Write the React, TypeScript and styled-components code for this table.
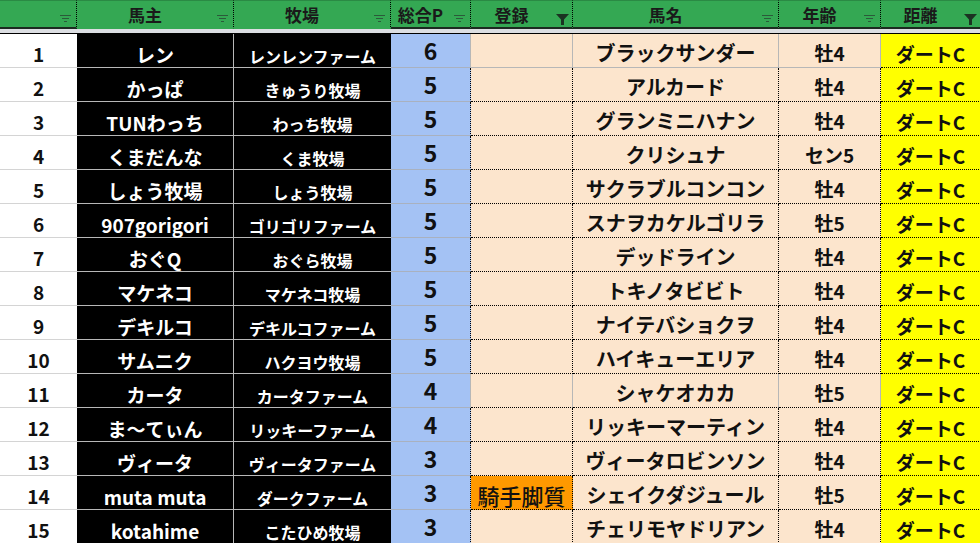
import React from "react";
import styled, { createGlobalStyle, css } from "styled-components";

const Global = createGlobalStyle`
  html, body { margin: 0; padding: 0; background: #ffffff; overflow: hidden; }
  body { font-family: "Noto Sans CJK JP", "Noto Sans", sans-serif; }
`;

const FONT = `"Noto Sans CJK JP", "Noto Sans", sans-serif`;
const COLS = "77px 157px 157px 80px 102px 206px 102px 100px";
const GRID = "#b7b7b7";
const DOT = "1px dotted #000";

const Sheet = styled.div`
  width: 981px;
  font-family: ${FONT};
`;

const HeaderRow = styled.div`
  display: grid;
  grid-template-columns: ${COLS};
  height: 29px;
`;

const HeaderCell = styled.div<{ $dark: boolean }>`
  position: relative;
  box-sizing: border-box;
  height: 29px;
  background: #34a853;
  border-top: 1px solid #2a8a44;
  border-right: ${DOT};
  border-bottom: 2px solid ${(p) => (p.$dark ? "#1c2a20" : "#34a853")};
  display: flex;
  align-items: center;
  justify-content: center;
  padding: 2px 20px 0 0;
  font-size: 17px;
  font-weight: 700;
  line-height: 22px;
  color: #1a1a1a;
`;

const FilterSlot = styled.span<{ $active: boolean }>`
  position: absolute;
  right: ${(p) => (p.$active ? "3px" : "5px")};
  bottom: ${(p) => (p.$active ? "2px" : "4px")};
  display: flex;
`;

const Divider = styled.div`
  height: 4px;
  background: #dcdee2;
  border-bottom: 1px solid #000;
`;

const Body = styled.div`
  display: grid;
  grid-template-columns: ${COLS};
  grid-auto-rows: 34px;
`;

type Kind = "num" | "owner" | "farm" | "point" | "reg" | "horse" | "age" | "dist";

const cellBase = css`
  box-sizing: border-box;
  display: flex;
  justify-content: center;
  white-space: nowrap;
  overflow: visible;
  font-family: ${FONT};
  font-weight: 700;
`;

const Cell = styled.div<{ $kind: Kind; $plain: boolean; $plainBottom: boolean; $hl?: boolean }>`
  ${cellBase}
  ${(p) => {
    switch (p.$kind) {
      case "num":
        return css`
          background: #fff;
          color: #111;
          border-bottom: 1px solid #d4d4d4;
          align-items: flex-end;
          padding-bottom: 1px;
          font-size: 19px;
          line-height: 24px;
        `;
      case "owner":
        return css`
          background: #000;
          color: #fff;
          border-right: 1px solid ${GRID};
          border-bottom: 1px solid ${GRID};
          align-items: flex-end;
          padding-bottom: 0px;
          font-size: 19px;
          line-height: 24px;
        `;
      case "farm":
        return css`
          background: #000;
          color: #fff;
          border-bottom: 1px solid ${GRID};
          align-items: flex-end;
          padding-bottom: 0px;
          font-size: 16px;
          line-height: 22px;
        `;
      case "point":
        return css`
          background: #a4c2f4;
          color: #111;
          border-right: ${p.$plain ? `1px solid ${GRID}` : DOT};
          border-bottom: 1px solid #a9b1bf;
          align-items: center;
          font-size: 23px;
          line-height: 28px;
          padding-bottom: 1px;
        `;
      case "dist":
        return css`
          background: #ffff00;
          color: #111;
          border-right: ${DOT};
          border-bottom: ${DOT};
          align-items: flex-end;
          padding-bottom: 1px;
          font-size: 19px;
          line-height: 24px;
        `;
      default:
        return css`
          background: ${p.$hl ? "#ff9900" : "#fce5cd"};
          color: #111;
          border-right: ${p.$plain ? `1px solid ${GRID}` : DOT};
          border-bottom: ${p.$plainBottom ? `1px solid ${GRID}` : DOT};
          align-items: flex-end;
          padding-bottom: 1px;
          font-size: ${p.$kind === "horse" ? "20px" : p.$kind === "reg" ? "22px" : "19px"};
          font-weight: ${p.$kind === "reg" ? 500 : 700};
          line-height: 26px;
        `;
    }
  }}
`;

const LinesIcon = () => (
  <svg width="11" height="8" viewBox="0 0 11 8">
    <g stroke="#2b5a3a" strokeWidth="1">
      <line x1="0" y1="0.5" x2="11" y2="0.5" />
      <line x1="2" y1="3.5" x2="9" y2="3.5" />
      <line x1="4" y1="6.5" x2="7" y2="6.5" />
    </g>
  </svg>
);

const FunnelIcon = () => (
  <svg width="13" height="11" viewBox="0 0 13 11">
    <path d="M0 0 H13 L8 5.5 V11 H5 V5.5 Z" fill="#1b3322" />
  </svg>
);

const headers: { label: string; dark: boolean; active: boolean }[] = [
  { label: "", dark: true, active: false },
  { label: "馬主", dark: false, active: false },
  { label: "牧場", dark: false, active: false },
  { label: "総合P", dark: true, active: false },
  { label: "登録", dark: true, active: true },
  { label: "馬名", dark: true, active: false },
  { label: "年齢", dark: true, active: false },
  { label: "距離", dark: true, active: true },
];

type Row = [string, string, number, string, string, string];

const rows: Row[] = [
  ["レン", "レンレンファーム", 6, "", "ブラックサンダー", "牡4"],
  ["かっぱ", "きゅうり牧場", 5, "", "アルカード", "牡4"],
  ["TUNわっち", "わっち牧場", 5, "", "グランミニハナン", "牡4"],
  ["くまだんな", "くま牧場", 5, "", "クリシュナ", "セン5"],
  ["しょう牧場", "しょう牧場", 5, "", "サクラブルコンコン", "牡4"],
  ["907gorigori", "ゴリゴリファーム", 5, "", "スナヲカケルゴリラ", "牡5"],
  ["おぐQ", "おぐら牧場", 5, "", "デッドライン", "牡4"],
  ["マケネコ", "マケネコ牧場", 5, "", "トキノタビビト", "牡4"],
  ["デキルコ", "デキルコファーム", 5, "", "ナイテバショクヲ", "牡4"],
  ["サムニク", "ハクヨウ牧場", 5, "", "ハイキューエリア", "牡4"],
  ["カータ", "カータファーム", 4, "", "シャケオカカ", "牡5"],
  ["ま～てぃん", "リッキーファーム", 4, "", "リッキーマーティン", "牡4"],
  ["ヴィータ", "ヴィータファーム", 3, "", "ヴィータロビンソン", "牡4"],
  ["muta muta", "ダークファーム", 3, "騎手脚質", "シェイクダジュール", "牡5"],
  ["kotahime", "こたひめ牧場", 3, "", "チェリモヤドリアン", "牡4"],
];

export default function App() {
  return (
    <>
      <Global />
      <Sheet>
        <HeaderRow>
          {headers.map((h, i) => (
            <HeaderCell key={i} $dark={h.dark}>
              {h.label}
              <FilterSlot $active={h.active}>{h.active ? <FunnelIcon /> : <LinesIcon />}</FilterSlot>
            </HeaderCell>
          ))}
        </HeaderRow>
        <Divider />
        <Body>
          {rows.map((r, i) => {
            const n = i + 1;
            const plain = n === 1 || n === 11;
            const plainBottom = n === 1;
            return (
              <React.Fragment key={n}>
                <Cell $kind="num" $plain={plain} $plainBottom={plainBottom}>{n}</Cell>
                <Cell $kind="owner" $plain={plain} $plainBottom={plainBottom}>{r[0]}</Cell>
                <Cell $kind="farm" $plain={plain} $plainBottom={plainBottom}>{r[1]}</Cell>
                <Cell $kind="point" $plain={plain} $plainBottom={plainBottom}>{r[2]}</Cell>
                <Cell $kind="reg" $plain={plain} $plainBottom={plainBottom} $hl={r[3] !== ""}>{r[3]}</Cell>
                <Cell $kind="horse" $plain={plain} $plainBottom={plainBottom}>{r[4]}</Cell>
                <Cell $kind="age" $plain={plain} $plainBottom={plainBottom}>{r[5]}</Cell>
                <Cell $kind="dist" $plain={plain} $plainBottom={plainBottom}>ダートC</Cell>
              </React.Fragment>
            );
          })}
        </Body>
      </Sheet>
    </>
  );
}
